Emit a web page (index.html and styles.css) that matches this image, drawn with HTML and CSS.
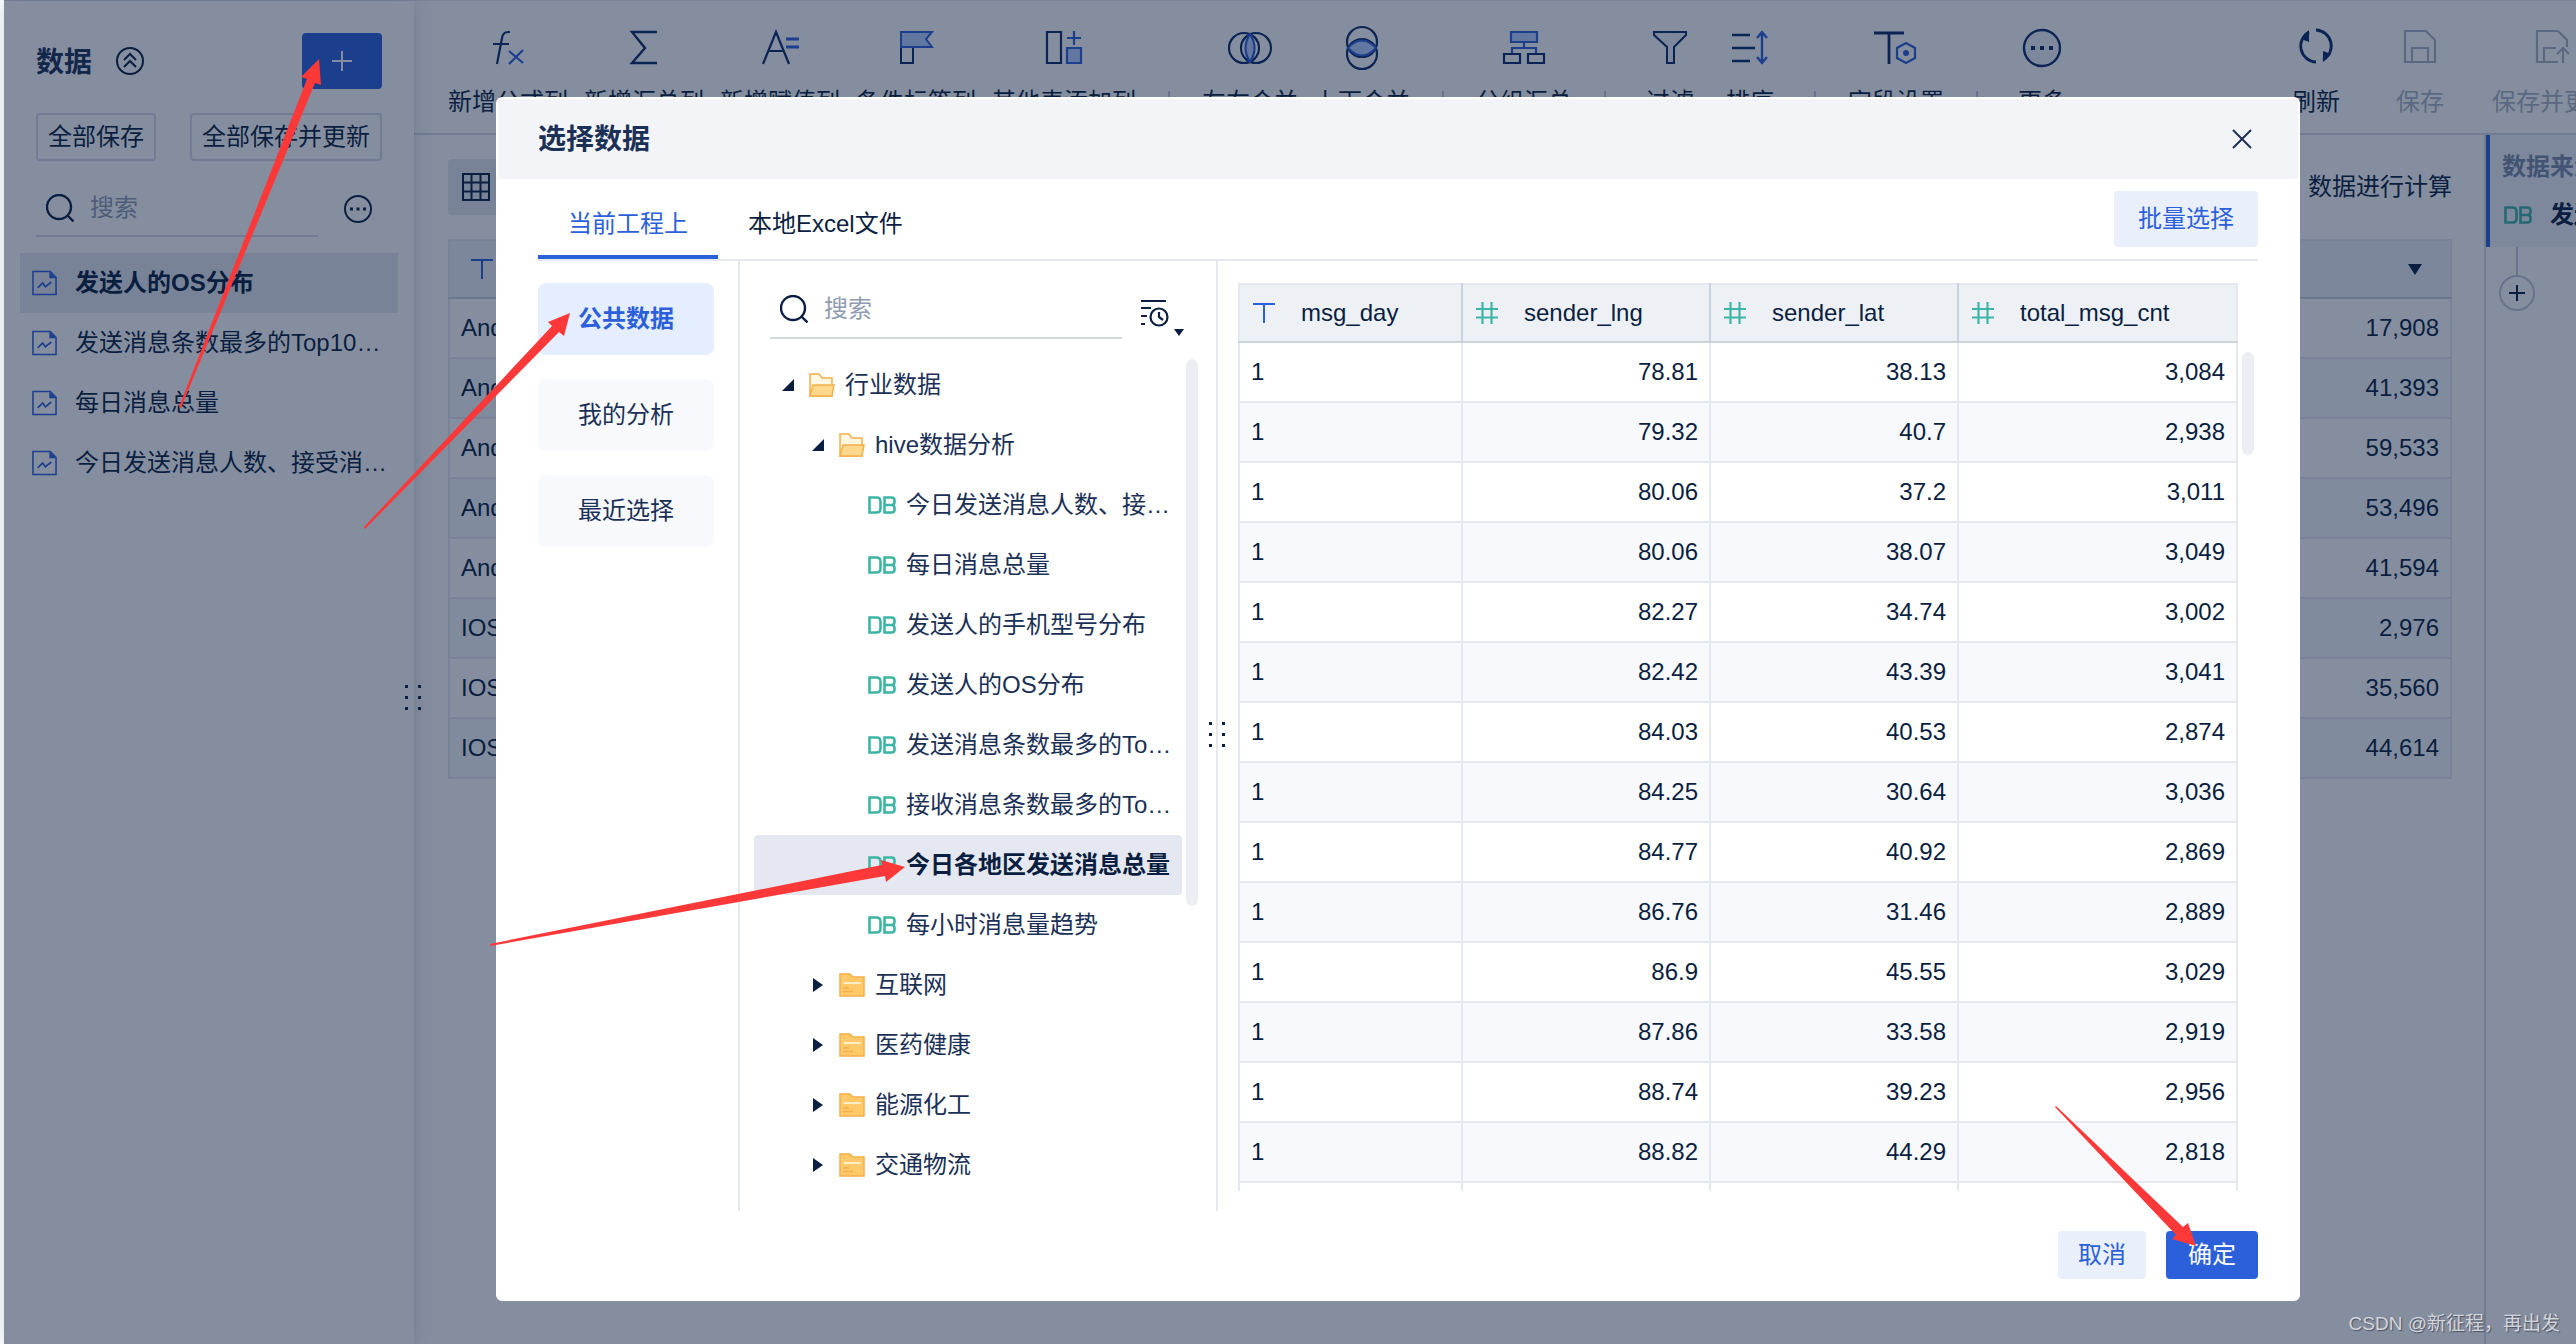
FILE: index.html
```html
<!DOCTYPE html>
<html lang="zh-CN">
<head>
<meta charset="utf-8">
<title>选择数据</title>
<link rel="stylesheet" href="styles.css">
</head>
<body>
<svg class="defs" aria-hidden="true">
  <symbol id="i-search" viewBox="0 0 28 28"><g fill="none" stroke="currentColor" stroke-width="2.4"><circle cx="13" cy="13" r="12"/><path d="M21.5 21.5l6 6"/></g></symbol>
  <symbol id="i-more" viewBox="0 0 28 28"><circle cx="14" cy="14" r="13" fill="none" stroke="currentColor" stroke-width="2"/><path d="M6 12.5h3v3H6zM12.500 12.500h3v3h-3zM19 12.500h3v3h-3z" fill="currentColor"/></symbol>
  <symbol id="i-doc" viewBox="0 0 26 26"><path d="M1 1h18l6 6v18H1z" fill="none" stroke="#2c60db" stroke-width="1.600"/><path d="M18 1l7 7h-7z" fill="#2c60db"/><path d="M6 18l5-5 3 4 6-5" fill="none" stroke="#2c60db" stroke-width="1.800"/></symbol>
  <symbol id="i-db" viewBox="0 0 28 18"><g fill="none" stroke="#3db5a5" stroke-width="2.600"><path d="M1.500 1.500h7q4 0 4 4v7q0 4-4 4h-7z"/><path d="M16.500 1.500h7q3 0 3 3v1.500q0 3-3 3q3 0 3 3v1.500q0 3-3 3h-7zM16.500 9h7"/></g></symbol>
  <symbol id="i-open" viewBox="0 0 26 24"><path d="M1 23V1h9l3 4h10v18z" fill="#fff7e2" stroke="#f3b04a" stroke-width="1.500"/><path d="M4 12h21l-2 11H1z" fill="#ffd88c" stroke="#f3b04a" stroke-width="1.500"/></symbol>
  <symbol id="i-folder" viewBox="0 0 26 24"><path d="M1 23V1h10l3 3h11v19z" fill="#ffc96a" stroke="#f3b04a" stroke-width="1.500"/><path d="M5 9h17v2H4z" fill="#ffedc4"/><path d="M4 15h6M4 18.500h10" stroke="#f3b04a" stroke-width="1.500"/></symbol>
  <symbol id="i-text" viewBox="0 0 22 22"><path d="M0 2h22M11 2v19" fill="none" stroke="#2c60db" stroke-width="2"/></symbol>
  <symbol id="i-num" viewBox="0 0 22 22"><path d="M6.500 0v22M15.500 0v22M0 7h22M0 15.500h22" fill="none" stroke="#3db5a5" stroke-width="2.200"/></symbol>
  <symbol id="i-dots" viewBox="0 0 16 26"><path d="M0 0h3v3H0zM13 0h3v3h-3zM0 11h3v3H0zM13 11h3v3h-3zM0 22h3v3H0zM13 22h3v3h-3z" fill="currentColor"/></symbol>
</svg>

<div class="app">
  <aside class="sidebar">
    <header class="side-head">
      <h1>数据</h1>
      <svg class="ic28" viewBox="0 0 28 28" fill="none" stroke="currentColor" stroke-width="2"><circle cx="14" cy="14" r="13"/><path d="M8 13l6-6 6 6M8 20l6-6 6 6"/></svg>
      <button class="add" aria-label="新增"><svg width="22" height="22" viewBox="0 0 22 22"><path d="M11 1v20M1 11h20" stroke="#fff" stroke-width="2"/></svg></button>
    </header>
    <div class="side-actions"><button>全部保存</button><button>全部保存并更新</button></div>
    <div class="side-search">
      <label class="search"><svg class="ic28"><use href="#i-search"/></svg><input type="text" placeholder="搜索" aria-label="搜索"></label>
      <svg class="ic28"><use href="#i-more"/></svg>
    </div>
    <ul class="side-list">
      <li class="on"><svg><use href="#i-doc"/></svg><span>发送人的OS分布</span></li>
      <li><svg><use href="#i-doc"/></svg><span>发送消息条数最多的Top10用户</span></li>
      <li><svg><use href="#i-doc"/></svg><span>每日消息总量</span></li>
      <li><svg><use href="#i-doc"/></svg><span>今日发送消息人数、接受消息人数</span></li>
    </ul>
    <svg class="dots side-dots"><use href="#i-dots"/></svg>
  </aside>

  <main class="work">
    <nav class="toolbar">
      <button><svg viewBox="0 0 36 44" fill="none" stroke-width="2.200"><path d="M25 6h-2q-5 0-6 6l-5 26M8 18h16" transform="translate(-5)" stroke="#0b2a66"/><path d="M19 25l14 12M33 24L19 38" stroke="#2c60db"/></svg>新增公式列</button>
      <button><svg viewBox="0 0 36 44"><path d="M31 6H6l13 16L6 37h25" fill="none" stroke="#0b2a66" stroke-width="2.400"/></svg>新增汇总列</button>
      <button><svg viewBox="0 0 36 44" fill="none" stroke-width="2.200"><path d="M1 38L14 6l13 32M6 25h16" stroke="#0b2a66"/><path d="M24 13h13M24 21h13" stroke="#2c60db" stroke-width="3"/></svg>新增赋值列</button>
      <button><svg viewBox="0 0 36 44" stroke-width="2"><path d="M3 21h12v16H3z" fill="none" stroke="#0b2a66"/><path d="M3 6h31l-6 7 6 8H3z" fill="#b9d0ff" stroke="#2c60db"/></svg>条件标签列</button>
      <button><svg viewBox="0 0 36 44" stroke-width="2.200"><path d="M1 6h14v31H1z" fill="none" stroke="#0b2a66"/><path d="M21 22h14v15H21z" fill="#b9d0ff" stroke="#2c60db"/><path d="M21 12h14M28 5v14" stroke="#2c60db"/></svg>其他表添加列</button>
      <i class="sep"></i>
      <button><svg viewBox="0 0 36 44" stroke-width="2.200"><g fill="none" stroke="#0b2a66"><circle cx="12" cy="22" r="15"/><circle cx="24" cy="22" r="15"/></g><path d="M18 8q9 14 0 28q-9-14 0-28z" fill="#b9d0ff" stroke="#2c60db"/></svg>左右合并</button>
      <button><svg viewBox="0 0 36 44" stroke-width="2.200"><g fill="none" stroke="#0b2a66"><circle cx="18" cy="16" r="15"/><circle cx="18" cy="28" r="15"/></g><path d="M4 22q14-15 28 0q-14 15-28 0z" fill="#b9d0ff" stroke="#2c60db"/></svg>上下合并</button>
      <i class="sep"></i>
      <button><svg viewBox="0 0 36 44" stroke-width="2.200"><path d="M5 6h26v10H5z" fill="#b9d0ff" stroke="#2c60db"/><path d="M18 16v6M6 28v-6h24v6" fill="none" stroke="#2c60db"/><path d="M-2 28h16v9H-2zM22 28h16v9H22z" fill="none" stroke="#0b2a66"/></svg>分组汇总</button>
      <i class="sep"></i>
      <button><svg viewBox="0 0 36 44"><path d="M2 6h32v3L22 21v16h-7V21L2 9z" fill="#eef3fb" stroke="#0b2a66" stroke-width="2"/></svg>过滤</button>
      <button><svg viewBox="0 0 36 44" fill="none" stroke-width="2.400"><path d="M0 9h18M0 22h23M0 35h18" stroke="#0b2a66"/><path d="M30 6v31M25 12l5-6 5 6M25 31l5 6 5-6" stroke="#2c60db"/></svg>排序</button>
      <i class="sep"></i>
      <button><svg viewBox="0 0 36 44" fill="none"><path d="M-4 7h30M11 7v31" stroke="#0b2a66" stroke-width="2.800"/><path d="M28 17l9 5v10l-9 5-9-5V22z" stroke="#2c60db" stroke-width="2.200"/><circle cx="28" cy="27" r="3" fill="#2c60db"/></svg>字段设置</button>
      <i class="sep"></i>
      <button><svg viewBox="0 0 36 44"><circle cx="18" cy="22" r="18" fill="#eef3fb" stroke="#0b2a66" stroke-width="2.400"/><path d="M7 20h4v4H7zM16 20h4v4h-4zM25 20h4v4h-4z" fill="#0b2a66"/></svg>更多</button>
      <div class="tool-right">
        <button><svg viewBox="0 0 36 44"><path d="M11 6A16 16 0 0 0 18 36M18 4A16 16 0 0 1 25 34" fill="none" stroke="#0b2a66" stroke-width="2.800"/><path d="M11 4v12L3 13zM25 36V25l8 3z" fill="#0b2a66"/></svg>刷新</button>
        <button disabled><svg viewBox="0 0 36 44" fill="none" stroke="currentColor" stroke-width="2.200"><path d="M3 5h21l9 9v22H3zM10 36V22h16v14"/></svg>保存</button>
        <button disabled><svg viewBox="0 0 36 44" fill="none" stroke="currentColor" stroke-width="2.200"><path d="M24 36H3V5h21l9 9v7M10 36V22h12M29 37V22M23 28l6-6 6 6"/></svg>保存并更新</button>
      </div>
    </nav>
    <div class="body">
      <section class="sheet">
        <div class="sheet-top">
          <button class="grid-btn" aria-label="表格"><svg class="ic28" viewBox="0 0 28 28"><path d="M1 1h26v26H1zM9.500 1v26M18.500 1v26M1 9.500h26M1 18.500h26" fill="none" stroke="currentColor" stroke-width="2"/></svg></button>
          <p>数据进行计算</p>
        </div>
        <table class="data back">
          <thead><tr><th><svg class="ic22"><use href="#i-text"/></svg></th><th class="r"><svg width="14" height="11"><path d="M0 0h14L7 11z" fill="currentColor"/></svg></th></tr></thead>
          <tbody>
            <tr><td>Android</td><td>17,908</td></tr>
            <tr><td>Android</td><td>41,393</td></tr>
            <tr><td>Android</td><td>59,533</td></tr>
            <tr><td>Android</td><td>53,496</td></tr>
            <tr><td>Android</td><td>41,594</td></tr>
            <tr><td>IOS</td><td>2,976</td></tr>
            <tr><td>IOS</td><td>35,560</td></tr>
            <tr><td>IOS</td><td>44,614</td></tr>
          </tbody>
        </table>
      </section>
      <aside class="steps">
        <div class="step"><h2>数据来源</h2><p><svg class="db"><use href="#i-db"/></svg>发送人的OS分布</p></div>
        <div class="line"></div>
        <button class="plus" aria-label="添加步骤"><svg width="16" height="16"><path d="M8 0v16M0 8h16" stroke="currentColor" stroke-width="2"/></svg></button>
      </aside>
    </div>
  </main>
</div>

<div class="overlay">
  <div class="dialog" role="dialog" aria-label="选择数据">
    <header class="dlg-head"><h2>选择数据</h2><button aria-label="关闭"><svg width="20" height="20"><path d="M1 1l18 18M19 1L1 19" stroke="currentColor" stroke-width="2"/></svg></button></header>
    <div class="tabs"><button class="tab on">当前工程上</button><button class="tab">本地Excel文件</button><button class="soft batch">批量选择</button></div>
    <div class="content">
      <nav class="cats"><button class="on">公共数据</button><button>我的分析</button><button>最近选择</button></nav>
      <section class="tree">
        <div class="tree-search">
          <label class="search"><svg class="ic28"><use href="#i-search"/></svg><input type="text" placeholder="搜索" aria-label="搜索数据"></label>
          <svg width="44" height="40" viewBox="0 0 44 40" fill="none" stroke="currentColor" stroke-width="2.200"><path d="M1 2h25M1 9h10M1 17h6M1 25h4"/><circle cx="19" cy="18" r="8.500"/><path d="M19 13v5l4 3"/><path d="M34 30h10l-5 7z" fill="currentColor" stroke="none"/></svg>
        </div>
        <ul>
          <li><svg class="caret"><path d="M12 0v12H0z"/></svg><svg class="fold"><use href="#i-open"/></svg><span>行业数据</span></li>
          <li class="l2"><svg class="caret"><path d="M12 0v12H0z"/></svg><svg class="fold"><use href="#i-open"/></svg><span>hive数据分析</span></li>
          <li class="l3"><svg class="db"><use href="#i-db"/></svg><span>今日发送消息人数、接受消息人数</span></li>
          <li class="l3"><svg class="db"><use href="#i-db"/></svg><span>每日消息总量</span></li>
          <li class="l3"><svg class="db"><use href="#i-db"/></svg><span>发送人的手机型号分布</span></li>
          <li class="l3"><svg class="db"><use href="#i-db"/></svg><span>发送人的OS分布</span></li>
          <li class="l3"><svg class="db"><use href="#i-db"/></svg><span>发送消息条数最多的Top10用户</span></li>
          <li class="l3"><svg class="db"><use href="#i-db"/></svg><span>接收消息条数最多的Top10用户</span></li>
          <li class="l3 on"><svg class="db"><use href="#i-db"/></svg><span>今日各地区发送消息总量</span></li>
          <li class="l3"><svg class="db"><use href="#i-db"/></svg><span>每小时消息量趋势</span></li>
          <li class="l2"><svg class="caret"><path d="M1 -1v14l10-7z"/></svg><svg class="fold"><use href="#i-folder"/></svg><span>互联网</span></li>
          <li class="l2"><svg class="caret"><path d="M1 -1v14l10-7z"/></svg><svg class="fold"><use href="#i-folder"/></svg><span>医药健康</span></li>
          <li class="l2"><svg class="caret"><path d="M1 -1v14l10-7z"/></svg><svg class="fold"><use href="#i-folder"/></svg><span>能源化工</span></li>
          <li class="l2"><svg class="caret"><path d="M1 -1v14l10-7z"/></svg><svg class="fold"><use href="#i-folder"/></svg><span>交通物流</span></li>
        </ul>
        <i class="thumb"></i>
        <svg class="dots tree-dots"><use href="#i-dots"/></svg>
      </section>
      <section class="preview">
        <div class="clip">
        <table class="data front">
          <colgroup><col class="c1"><col class="c2"><col class="c2"><col></colgroup>
          <thead><tr>
            <th><svg class="ic22"><use href="#i-text"/></svg>msg_day</th>
            <th><svg class="ic22"><use href="#i-num"/></svg>sender_lng</th>
            <th><svg class="ic22"><use href="#i-num"/></svg>sender_lat</th>
            <th><svg class="ic22"><use href="#i-num"/></svg>total_msg_cnt</th>
          </tr></thead>
          <tbody>
            <tr><td>1</td><td>78.81</td><td>38.13</td><td>3,084</td></tr>
            <tr><td>1</td><td>79.32</td><td>40.7</td><td>2,938</td></tr>
            <tr><td>1</td><td>80.06</td><td>37.2</td><td>3,011</td></tr>
            <tr><td>1</td><td>80.06</td><td>38.07</td><td>3,049</td></tr>
            <tr><td>1</td><td>82.27</td><td>34.74</td><td>3,002</td></tr>
            <tr><td>1</td><td>82.42</td><td>43.39</td><td>3,041</td></tr>
            <tr><td>1</td><td>84.03</td><td>40.53</td><td>2,874</td></tr>
            <tr><td>1</td><td>84.25</td><td>30.64</td><td>3,036</td></tr>
            <tr><td>1</td><td>84.77</td><td>40.92</td><td>2,869</td></tr>
            <tr><td>1</td><td>86.76</td><td>31.46</td><td>2,889</td></tr>
            <tr><td>1</td><td>86.9</td><td>45.55</td><td>3,029</td></tr>
            <tr><td>1</td><td>87.86</td><td>33.58</td><td>2,919</td></tr>
            <tr><td>1</td><td>88.74</td><td>39.23</td><td>2,956</td></tr>
            <tr><td>1</td><td>88.82</td><td>44.29</td><td>2,818</td></tr>
            <tr><td></td><td></td><td></td><td></td></tr>
          </tbody>
        </table>
        </div>
        <i class="thumb"></i>
      </section>
    </div>
    <footer><button class="soft">取消</button><button class="primary">确定</button></footer>
  </div>
</div>

<svg class="arrows" viewBox="0 0 2576 1344" fill="#fd3838" aria-hidden="true">
  <path d="M179 407L307 79l-6-2 18-18 2 26-6-2L181 408z"/>
  <path d="M364 527L552 326l-4-4 22-9-6 23-5-4L365 529z"/>
  <path d="M490 944L882 865l-1-5 24 7-19 15-1-6L490 946z"/>
  <path d="M2056 1106L2183 1227l5-4 8 23-24-7 4-4L2055 1107z"/>
</svg>
<p class="watermark">CSDN @新征程，再出发</p>
</body>
</html>
```
FILE: styles.css
```css
* { box-sizing: border-box; margin: 0; padding: 0; }
html, body { height: 100%; }
body {
  position: relative;
  overflow: hidden;
  background: #fff;
  color: #091e40;
  font: 24px/32px "Liberation Sans", "Noto Sans CJK SC", sans-serif;
}
button, input { font: inherit; color: inherit; border: 0; background: none; }
input { outline: 0; min-width: 0; width: 0; flex: 1; }
input::placeholder { color: #8f9bb0; opacity: 1; }
ul { list-style: none; }
svg { flex: none; overflow: visible; }
.defs { position: absolute; width: 0; height: 0; }
.ic28 { width: 28px; height: 28px; }
.ic22 { width: 22px; height: 22px; }
.db { width: 28px; height: 18px; }
.dots { position: absolute; width: 16px; height: 26px; }
.search { display: flex; align-items: center; gap: 16px; flex: 1; min-width: 0; padding: 0 10px; border-bottom: 2px solid #d5dae2; }

.app { display: flex; height: 100%; margin-left: 4px; border-top: 1px solid #e5e9ef; }
.sidebar { position: relative; flex: 0 0 410px; min-width: 0; padding: 32px 16px; z-index: 1; background: #fff; box-shadow: 0 0 20px rgba(9, 60, 90, .2); }
.side-head { display: flex; align-items: center; gap: 24px; padding: 0 16px; height: 56px; }
.side-head h1 { padding-top: 4px; font-size: 28px; line-height: 40px; color: #1b3056; }
.add { display: grid; place-items: center; width: 80px; height: 56px; margin-left: auto; background: #2c60db; border-radius: 4px; }
.side-actions { display: flex; justify-content: space-between; margin: 24px 16px 0; }
.side-actions button { height: 48px; padding: 0 10px; border: 2px solid #d5dae2; border-radius: 4px; line-height: 44px; white-space: nowrap; }
.side-search { display: flex; align-items: center; gap: 26px; margin: 20px 26px 16px 16px; }
.side-search .search { height: 56px; }
.side-list li { display: flex; align-items: center; gap: 18px; height: 60px; padding: 0 8px 0 12px; }
.side-list svg { width: 25px; height: 26px; }
.side-list span { flex: 1; min-width: 0; overflow: hidden; white-space: nowrap; text-overflow: ellipsis; }
.side-list .on { background: #e5e9ef; font-weight: bold; }
.side-dots { right: -7px; top: 684px; }

.work { flex: 1; min-width: 0; display: flex; flex-direction: column; overflow: hidden; }
.toolbar { display: flex; gap: 16px; height: 134px; padding: 25px 0 0 34px; border-bottom: 2px solid #d5dae2; }
.toolbar button { display: flex; flex-direction: column; align-items: center; flex: none; gap: 16px; min-width: 64px; height: 96px; white-space: nowrap; }
.toolbar svg { width: 36px; height: 44px; }
.toolbar button:disabled { color: #a9b2c3; }
.sep { flex: none; width: 2px; height: 24px; margin: 65px 16px 0; background: #c3cad6; }
.tool-right { display: flex; gap: 40px; margin: 0 -36px 0 auto; }
.body { display: flex; flex: 1; }
.sheet { flex: 1; min-width: 0; padding: 24px 32px 0 34px; }
.sheet-top { display: flex; align-items: center; justify-content: space-between; height: 56px; margin-bottom: 24px; }
.grid-btn { display: grid; place-items: center; width: 56px; height: 56px; background: #e5e9ef; border-radius: 4px; }
.steps { flex: 0 0 92px; min-width: 0; border-left: 2px solid #d5dae2; white-space: nowrap; }
.step { height: 112px; padding: 14px 0 0 12px; border-left: 4px solid #2c60db; background: #eff3f9; }
.step h2 { font-size: 24px; line-height: 36px; color: #7888a6; }
.step p { display: flex; align-items: center; gap: 18px; padding-left: 2px; margin-top: 14px; font-weight: bold; }
.line { width: 2px; height: 28px; margin-left: 30px; background: #c3cad6; }
.plus { display: grid; place-items: center; width: 36px; height: 36px; margin-left: 13px; border: 2px solid #c3cad6; border-radius: 50%; }

.data { width: 100%; border-collapse: collapse; table-layout: fixed; }
.data th, .data td { height: 60px; border: 2px solid #e5e9ef; padding: 0 11px; text-align: right; }
.data td:first-child { text-align: left; }
.data th { height: 58px; text-align: left; font-weight: normal; white-space: nowrap; background: #edf1f6; border-bottom-color: #cdd3dc; border-right-color: #cdd3dc; }
.data th:last-child { border-right-color: #e5e9ef; }
.data th svg { margin: 0 26px 0 2px; vertical-align: -3px; }
.data tbody tr:nth-child(even) { background: #f7f9fd; }
.data.back th svg { margin-left: 10px; }
.data.back .r { text-align: right; border-left: 0; padding-right: 28px; }
.data.back .r svg { margin: 0; vertical-align: 2px; }
.data.back th:first-child { border-right: 0; }

.overlay { position: absolute; inset: 0 0 0 4px; display: flex; align-items: flex-start; padding: 97px 276px 0 492px; background: rgba(11, 30, 64, .5); z-index: 2; }
.dialog { flex: 1; min-width: 0; border: 2px solid #fff; border-radius: 6px; background: #fff; }
.dlg-head { display: flex; align-items: center; justify-content: space-between; height: 80px; padding: 0 46px 0 40px; background: #f2f4f8; }
.dlg-head h2 { padding-top: 2px; font-size: 28px; line-height: 40px; color: #1b3056; }
.dlg-head button { display: grid; color: #1b3056; }
.tabs { display: flex; align-items: center; height: 82px; margin: 0 40px; border-bottom: 2px solid #e5e9ef; }
.tab { height: 80px; padding: 14px 30px 0; border-bottom: 4px solid transparent; }
.tab.on { color: #2c60db; border-color: #2c60db; }
.soft { background: #e9effb; color: #2c60db; border-radius: 4px; }
.batch { width: 144px; height: 56px; margin-left: auto; }
.content { display: flex; height: 950px; padding: 0 40px; }
.cats { display: flex; flex-direction: column; gap: 24px; flex: 0 0 202px; padding: 22px 24px 0 0; border-right: 2px solid #e5e9ef; }
.cats button { height: 72px; border-radius: 8px; background: #f7f9fd; color: #1b3056; }
.cats .on { background: #e4eeff; color: #2c60db; font-weight: bold; }
.tree { position: relative; flex: 0 0 478px; min-width: 0; padding: 20px 34px 0 14px; border-right: 2px solid #e5e9ef; }
.tree-search { display: flex; align-items: flex-end; gap: 18px; margin: 0 -2px 16px 16px; }
.tree-search .search { height: 58px; }
.tree li { display: flex; align-items: center; height: 60px; padding: 0 8px 0 28px; border-radius: 4px; color: #1b3056; }
.tree li.l2 { padding-left: 58px; }
.tree li.l3 { padding-left: 114px; }
.tree li.on { background: #e5e8f0; color: #091e40; font-weight: bold; }
.tree span { flex: 1; min-width: 0; margin-left: 10px; overflow: hidden; white-space: nowrap; text-overflow: ellipsis; }
.caret { width: 12px; height: 12px; margin-right: 15px; fill: #091e40; }
.fold { width: 26px; height: 24px; }
.thumb { position: absolute; width: 12px; border-radius: 6px; background: #edeef3; }
.tree .thumb { right: 18px; top: 98px; height: 547px; }
.tree-dots { right: -9px; top: 461px; }
.preview { position: relative; flex: 1; min-width: 0; padding: 22px 20px 0; }
.clip { height: 908px; overflow: hidden; }
.c1 { width: 223px; }
.c2 { width: 248px; }
.preview .thumb { right: 4px; top: 91px; height: 103px; }
footer { display: flex; justify-content: flex-end; gap: 20px; padding: 20px 40px; }
footer button { height: 48px; width: 88px; }
.primary { width: 92px; background: #2c60db; color: #fff; border-radius: 4px; }

.arrows { position: absolute; left: 0; top: 0; width: 100%; z-index: 3; pointer-events: none; }
.watermark { position: absolute; right: 16px; bottom: 4px; z-index: 4; font-size: 19px; color: #d3d6dc; text-shadow: 1px 1px 1px #4b5261; }
```
